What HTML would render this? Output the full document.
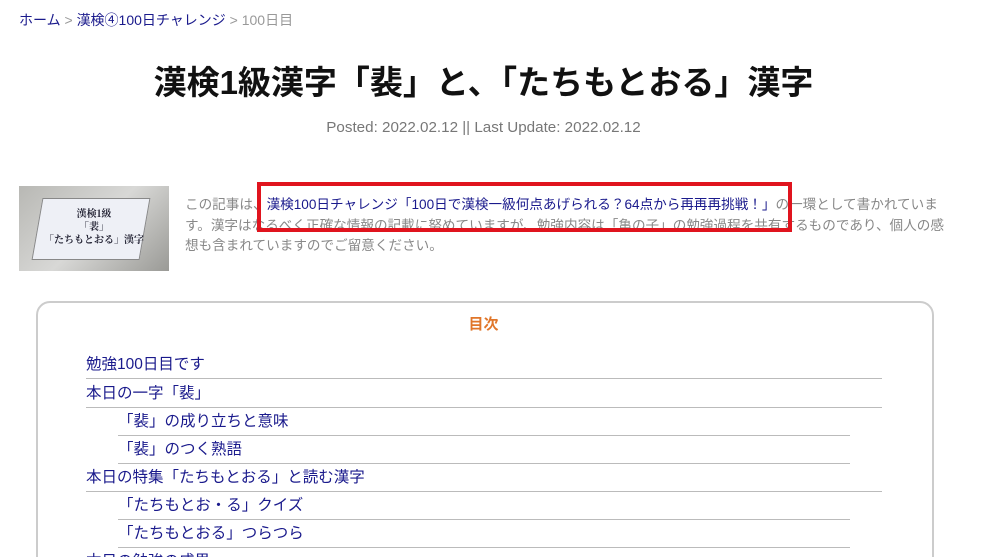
<!DOCTYPE html><html><head><meta charset="utf-8"><style>
html,body{margin:0;width:1005px;height:557px;overflow:hidden}
body{background:#fff;font-family:"Liberation Sans","Noto Sans CJK JP",sans-serif;position:relative}
.a{position:absolute;white-space:nowrap}
.bc{left:19px;top:10px;font-size:14px;color:#999}.bc a{color:#1a1a8c}
h1{position:absolute;left:0;width:967px;text-align:center;top:56px;margin:0;font-size:33px;font-weight:bold;color:#111;white-space:nowrap}
.post{left:0;width:967px;text-align:center;top:119px;font-size:15.2px;color:#777}
.img{left:19px;top:186px;width:150px;height:85px;background:linear-gradient(135deg,#b8b8b4,#d8d8d6 50%,#9a9a96);overflow:hidden}
.card{position:absolute;left:18px;top:12px;width:106px;height:60px;background:#eef0f6;border:1px solid #888;transform:skewX(-10deg)}
.it{position:absolute;left:0;width:150px;text-align:center;font-family:"Noto Serif CJK SC",serif;font-weight:bold;color:#223;font-size:10px;line-height:13px;top:20px}
.txt{left:185px;top:195px;font-size:13.6px;line-height:20.5px;color:#888}
.txt a{color:#1a1a8c}
.red{left:257px;top:182px;width:527px;height:42px;border:4px solid #e0141e}
.toc{position:absolute;left:36px;top:301px;width:894px;height:300px;border:2px solid #ccc;border-radius:14px}
.mk{left:0;width:967px;text-align:center;top:313px;font-size:15px;font-weight:bold;color:#e0762a}
.li{position:absolute;font-size:15.5px;color:#1a1a8c;height:28px;line-height:30px;border-bottom:1px solid #bbb}
.l1{left:86px;width:796px}.l2{left:118px;width:732px}
</style></head><body>
<div class="a bc"><a>ホーム</a> &gt; <a>漢検④100日チャレンジ</a> &gt; 100日目</div>
<h1>漢検1級漢字「裴」と、「たちもとおる」漢字</h1>
<div class="a post">Posted: 2022.02.12 || Last Update: 2022.02.12</div>
<div class="a img"><div class="card"></div><div class="it">漢検1級<br>「裴」<br>「たちもとおる」漢字</div></div>
<div class="a txt">この記事は、<a>漢検100日チャレンジ「100日で漢検一級何点あげられる？64点から再再再挑戦！」</a>の一環として書かれていま<br>す。漢字はなるべく正確な情報の記載に努めていますが、勉強内容は「亀の子」の勉強過程を共有するものであり、個人の感<br>想も含まれていますのでご留意ください。</div>
<div class="a red"></div>
<div class="toc"></div>
<div class="a mk">目次</div>
<div class="li l1" style="top:350px">勉強100日目です</div>
<div class="li l1" style="top:379px">本日の一字「裴」</div>
<div class="li l2" style="top:407px">「裴」の成り立ちと意味</div>
<div class="li l2" style="top:435px">「裴」のつく熟語</div>
<div class="li l1" style="top:463px">本日の特集「たちもとおる」と読む漢字</div>
<div class="li l2" style="top:491px">「たちもとお・る」クイズ</div>
<div class="li l2" style="top:519px">「たちもとおる」つらつら</div>
<div class="li l1" style="top:547px">本日の勉強の成果</div>
</body></html>
